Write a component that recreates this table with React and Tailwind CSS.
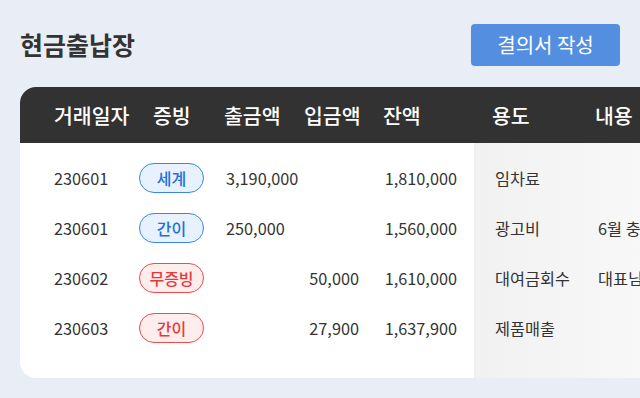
import React from "react";

const rows = [
  { date: "230601", badge: "세계", tone: "blue", out: "3,190,000", inn: "", bal: "1,810,000", use: "임차료", memo: "" },
  { date: "230601", badge: "간이", tone: "blue", out: "250,000", inn: "", bal: "1,560,000", use: "광고비", memo: "6월 충" },
  { date: "230602", badge: "무증빙", tone: "red", out: "", inn: "50,000", bal: "1,610,000", use: "대여금회수", memo: "대표님" },
  { date: "230603", badge: "간이", tone: "red", out: "", inn: "27,900", bal: "1,637,900", use: "제품매출", memo: "" },
];

function Badge({ label, tone }) {
  const cls =
    tone === "blue"
      ? "border-[#3a86e8] bg-[#e7f2fe] text-[#1f6fd8]"
      : "border-[#ee4b4b] bg-[#fdeded] text-[#e33b3b]";
  return (
    <span
      className={`flex h-[30px] w-[65px] items-center justify-center rounded-full border text-[16px] font-medium leading-none ${cls}`}
    >
      {label}
    </span>
  );
}

export default function App() {
  return (
    <div
      className="h-[398px] w-[640px] overflow-hidden bg-[#e9eef6] pt-[24px] pl-[20px]"
      style={{ fontFamily: '"Noto Sans CJK KR", "Noto Sans", sans-serif' }}
    >
      <div className="flex h-[42px] items-center justify-between pr-[20px]">
        <h1 className="text-[25px] font-bold text-[#333333]">현금출납장</h1>
        <button className="flex h-[42px] w-[149px] items-center justify-center rounded-[4px] bg-[#538ee0] text-[20px] text-white">
          결의서 작성
        </button>
      </div>

      <div className="mt-[21px] w-[700px] overflow-hidden rounded-l-[16px] bg-white">
        <div className="flex h-[56px] items-center bg-[#323232] pl-[34px] text-[20.5px] font-medium text-white">
          <div className="w-[99px]">거래일자</div>
          <div className="w-[71px]">증빙</div>
          <div className="w-[80px]">출금액</div>
          <div className="w-[79px]">입금액</div>
          <div className="w-[109px]">잔액</div>
          <div className="w-[103px]">용도</div>
          <div>내용</div>
        </div>

        <div className="flex text-[16.3px] text-[#333333]">
          <div className="w-[454px] pt-[10px] pb-[25px] pl-[34px]">
            {rows.map((r, i) => (
              <div key={i} className="flex h-[50px] items-center">
                <div className="w-[85px]">{r.date}</div>
                <div className="w-[87px]">
                  <Badge label={r.badge} tone={r.tone} />
                </div>
                <div className="w-[78px]">{r.out}</div>
                <div className="w-[55px] text-right">{r.inn}</div>
                <div className="w-[98px] text-right">{r.bal}</div>
              </div>
            ))}
          </div>
          <div className="flex-1 bg-gradient-to-r from-[#f1f1f1] to-[#fbfbfb] pt-[10px] pb-[25px] pl-[21px]">
            {rows.map((r, i) => (
              <div key={i} className="flex h-[50px] items-center">
                <div className="w-[103px]">{r.use}</div>
                <div className="whitespace-nowrap">{r.memo}</div>
              </div>
            ))}
          </div>
        </div>
      </div>
    </div>
  );
}
